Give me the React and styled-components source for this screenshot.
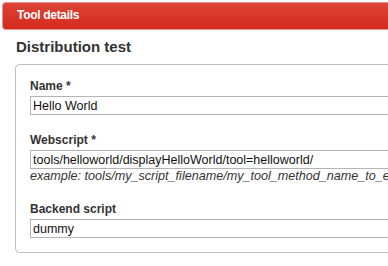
import React from 'react';
import styled, { createGlobalStyle } from 'styled-components';

const GlobalStyle = createGlobalStyle`
  html, body {
    margin: 0;
    padding: 0;
    background: #fff;
    overflow: hidden;
  }
  body {
    font-family: "Liberation Sans", Arial, sans-serif;
    color: #333;
  }
`;

const Page = styled.div`
  width: 480px;
  padding: 2px 0 0 2px;
`;

const PanelHeader = styled.div`
  box-sizing: border-box;
  height: 28px;
  padding-left: 14px;
  border: 1px solid #e9948e;
  border-right: none;
  border-radius: 4px 0 0 4px;
  background: linear-gradient(to bottom, #dd4337 0%, #d42a1d 100%);
  color: #fff;
  font-size: 12px;
  font-weight: bold;
  letter-spacing: -0.3px;
  line-height: 25px;
`;

const Title = styled.h2`
  margin: 8px 0 8px 14px;
  font-size: 15px;
  line-height: 18px;
  font-weight: bold;
  color: #333;
`;

const Fieldset = styled.div`
  margin-left: 13px;
  padding: 14px 0 14px 14px;
  border: 1px solid #bdbdbd;
  border-right: none;
  border-radius: 5px 0 0 5px;
`;

const Field = styled.div`
  margin-bottom: ${p => (p.$last ? 0 : '18px')};
`;

const Label = styled.label`
  display: block;
  margin-bottom: 2px;
  font-size: 12px;
  line-height: 15px;
  font-weight: bold;
  color: #333;
`;

const Input = styled.input`
  display: block;
  box-sizing: border-box;
  width: 100%;
  height: 19px;
  margin: 0;
  padding: 0 2px;
  border: 1px solid #b4b4b4;
  border-radius: 0;
  outline: none;
  font-family: "Liberation Sans", Arial, sans-serif;
  font-size: 12.5px;
  color: #111;
  background: #fff;
`;

const Hint = styled.div`
  margin-bottom: 2px;
  font-size: 12.6px;
  line-height: 15px;
  font-style: italic;
  color: #333;
  white-space: nowrap;
`;

export default function App() {
  return (
    <>
      <GlobalStyle />
      <Page>
        <PanelHeader>Tool details</PanelHeader>
        <Title>Distribution test</Title>
        <Fieldset>
          <Field>
            <Label>Name *</Label>
            <Input defaultValue="Hello World" />
          </Field>
          <Field>
            <Label>Webscript *</Label>
            <Input defaultValue="tools/helloworld/displayHelloWorld/tool=helloworld/" />
            <Hint>example: tools/my_script_filename/my_tool_method_name_to_execute/</Hint>
          </Field>
          <Field $last>
            <Label>Backend script</Label>
            <Input defaultValue="dummy" />
          </Field>
        </Fieldset>
      </Page>
    </>
  );
}
